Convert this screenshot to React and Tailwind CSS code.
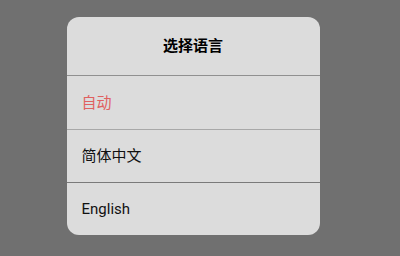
export default function App() {
  const font = { fontFamily: 'Roboto, "Noto Sans CJK SC", sans-serif' };
  return (
    <div className="w-[400px] h-[256px] bg-[#707070] flex justify-center pt-[17px]" style={font}>
      <div className="w-[253px] h-[218px] bg-[#dcdcdc] rounded-[12px] flex flex-col overflow-hidden ml-[-14px]">
        <div className="h-[59px] flex items-center justify-center border-b border-[#909090] text-[15px] font-bold text-black pt-[1px]">
          选择语言
        </div>
        <div className="h-[54px] flex items-center px-[15px] pt-[2px] border-b border-[#a8a8a8] text-[15px] text-[#e06060]">
          自动
        </div>
        <div className="h-[53px] flex items-center px-[15px] pt-[1px] border-b border-[#7a7a7a] text-[15px] text-[#111]">
          简体中文
        </div>
        <div className="flex-1 flex items-center px-[15px] text-[15px] text-[#111]">
          English
        </div>
      </div>
    </div>
  );
}
